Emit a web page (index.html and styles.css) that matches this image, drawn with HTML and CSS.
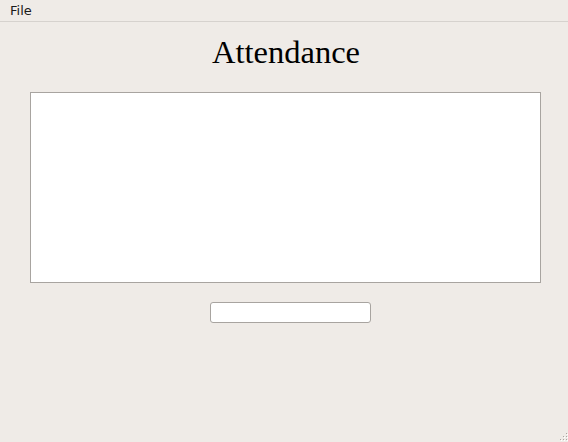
FILE: index.html
```html
<!DOCTYPE html>
<html>
<head>
<meta charset="utf-8">
<link rel="stylesheet" href="styles.css">
</head>
<body>
<div class="window">
  <div class="menubar"><span class="menu-item">File</span></div>
  <div class="content">
    <h1 class="title">Attendance</h1>
    <div class="listbox"></div>
    <div class="entry-row"><input class="entry" type="text"></div>
  </div>
  <div class="grip">
    <svg width="12" height="12" viewBox="0 0 12 12">
      <g fill="#a9a5a0">
        <rect x="10" y="1" width="1" height="1"/>
        <rect x="7" y="4" width="1" height="1"/><rect x="10" y="4" width="1" height="1"/>
        <rect x="4" y="7" width="1" height="1"/><rect x="7" y="7" width="1" height="1"/><rect x="10" y="7" width="1" height="1"/>
        <rect x="1" y="10" width="1" height="1"/><rect x="4" y="10" width="1" height="1"/><rect x="7" y="10" width="1" height="1"/><rect x="10" y="10" width="1" height="1"/>
      </g>
      <g fill="#ffffff">
        <rect x="11" y="2" width="1" height="1"/>
        <rect x="8" y="5" width="1" height="1"/><rect x="11" y="5" width="1" height="1"/>
        <rect x="5" y="8" width="1" height="1"/><rect x="8" y="8" width="1" height="1"/><rect x="11" y="8" width="1" height="1"/>
        <rect x="2" y="11" width="1" height="1"/><rect x="5" y="11" width="1" height="1"/><rect x="8" y="11" width="1" height="1"/><rect x="11" y="11" width="1" height="1"/>
      </g>
    </svg>
  </div>
</div>
</body>
</html>
```

FILE: styles.css
```css
html, body {
  margin: 0;
  padding: 0;
  background: #efebe7;
}
.window {
  position: relative;
  width: 568px;
  height: 442px;
  overflow: hidden;
  background: #efebe7;
}
.menubar {
  height: 21px;
  border-bottom: 1px solid #d6d2ce;
  display: flex;
  align-items: center;
  font-family: "DejaVu Sans", sans-serif;
  font-size: 13px;
  color: #1a1a1a;
}
.menu-item {
  padding-left: 10px;
  line-height: 21px;
}
.content {
  display: flex;
  flex-direction: column;
  align-items: flex-start;
}
.title {
  margin: 12px 0 0 0;
  align-self: center;
  padding-left: 4px;
  font-family: "Liberation Serif", serif;
  font-weight: normal;
  font-size: 32.5px;
  line-height: 37px;
  color: #000;
}
.listbox {
  margin: 21px 0 0 30px;
  width: 509px;
  height: 189px;
  background: #fff;
  border: 1px solid #a8a4a0;
}
.entry-row {
  margin: 19px 0 0 210px;
}
.entry {
  display: block;
  box-sizing: border-box;
  width: 161px;
  height: 21px;
  margin: 0;
  padding: 0 4px;
  border: 1px solid #a8a4a0;
  border-radius: 3px;
  background: #fff;
  outline: none;
}
.grip {
  position: absolute;
  right: 0;
  bottom: 0;
  width: 12px;
  height: 12px;
}
```
